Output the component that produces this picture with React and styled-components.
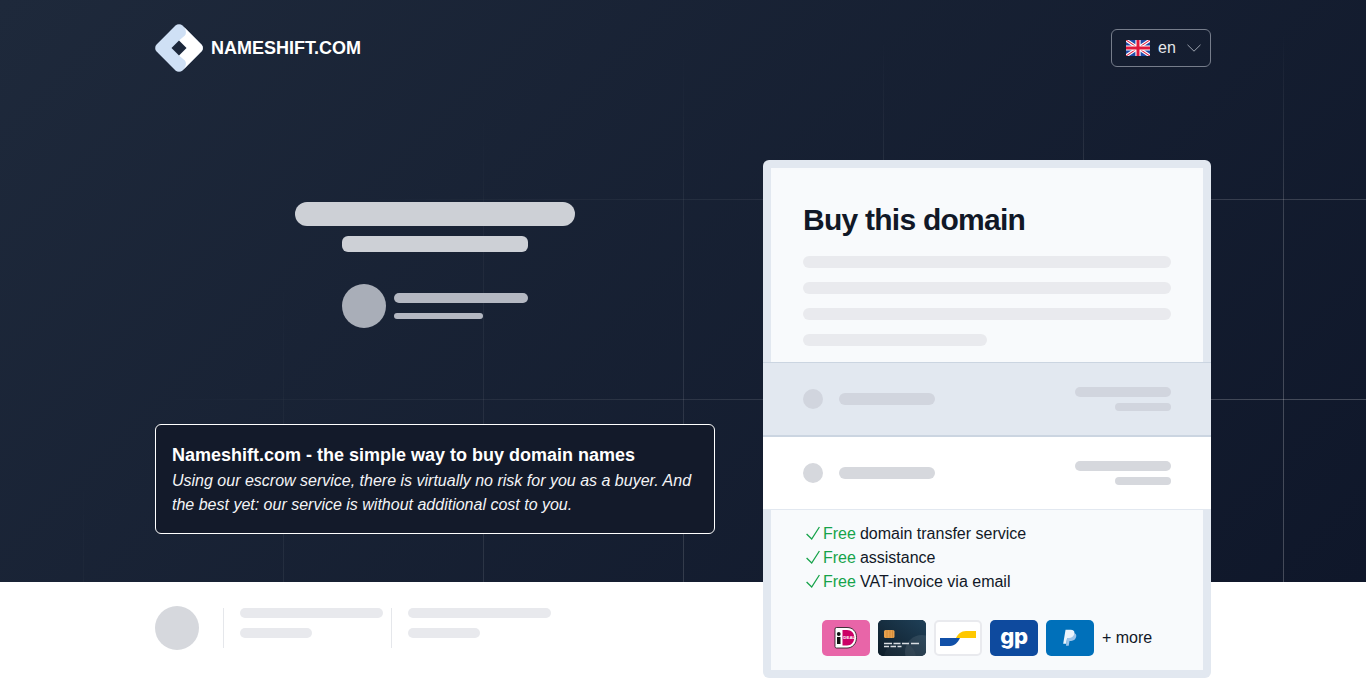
import React from "react";
import styled, { createGlobalStyle } from "styled-components";

const Global = createGlobalStyle`
  html, body { margin: 0; padding: 0; background: #fff; }
  body { font-family: "Liberation Sans", Arial, sans-serif; color: #111827; overflow: hidden; }
  * { box-sizing: border-box; }
`;

const Hero = styled.section`
  position: relative;
  height: 582px;
  background: linear-gradient(135deg, #1e293b 0%, #0f172a 100%);
`;
const GridLines = styled.div`
  position: absolute;
  inset: 0;
  background-image:
    linear-gradient(to right, rgba(255, 255, 255, 0.22) 1px, transparent 1px),
    linear-gradient(to bottom, rgba(255, 255, 255, 0.22) 1px, transparent 1px);
  background-size: 200px 200px;
  background-position: 83px 199px;
  mask-image:
    linear-gradient(135deg, transparent 28%, #000 88%),
    linear-gradient(to bottom, transparent 30px, #000 220px);
  mask-composite: intersect;
`;
const Wrap = styled.div`
  position: relative;
  width: 1056px;
  margin: 0 auto;
`;
const TopBar = styled.header`
  display: flex;
  align-items: center;
  justify-content: space-between;
  padding-top: 24px;
`;
const Brand = styled.div`
  display: flex;
  align-items: center;
  gap: 8px;
  font-size: 18px;
  font-weight: 700;
  color: #fff;
`;
const LangButton = styled.div`
  display: flex;
  align-items: center;
  width: 100px;
  height: 38px;
  padding: 0 9px 0 14px;
  border: 1px solid #767d8b;
  border-radius: 6px;
  color: #e5e7eb;
  font-size: 16px;
`;
const LangLabel = styled.span`
  margin: 0 auto 0 8px;
`;
const Columns = styled.div`
  display: grid;
  grid-template-columns: 560px 448px;
  gap: 48px;
  padding-top: 88px;
`;
const Left = styled.div`
  display: flex;
  flex-direction: column;
  align-items: center;
  padding-top: 42px;
`;
const Bar = styled.div`
  width: ${(p) => p.$w};
  height: ${(p) => p.$h}px;
  border-radius: ${(p) => Math.min(p.$h / 2, 6) * (p.$h > 16 ? 2 : 1)}px;
  background: ${(p) => p.$c};
  flex: none;
`;
const SubtitleBar = styled(Bar)`
  margin-top: 10px;
`;
const Dot = styled.div`
  width: ${(p) => p.$s}px;
  height: ${(p) => p.$s}px;
  border-radius: 50%;
  background: ${(p) => p.$c};
  flex: none;
`;
const Author = styled.div`
  display: flex;
  align-items: center;
  gap: 8px;
  width: 186px;
  margin: 32px 0 96px;
`;
const AuthorLines = styled.div`
  display: flex;
  flex-direction: column;
  gap: 10px;
  flex: 1;
`;
const InfoBox = styled.div`
  width: 100%;
  height: 110px;
  padding: 16px;
  border: 1px solid #fff;
  border-radius: 6px;
  background: #131a2a;
  color: #fff;
`;
const InfoTitle = styled.h2`
  margin: 0;
  font-size: 18px;
  line-height: 28px;
  font-weight: 700;
`;
const InfoText = styled.p`
  margin: 0;
  font-size: 16px;
  line-height: 24px;
  font-style: italic;
  color: #f3f4f6;
`;
const Card = styled.aside`
  position: relative;
  z-index: 2;
  height: 518px;
  padding: 8px 0;
  display: flex;
  flex-direction: column;
  background: #e2e8f0;
  border-radius: 6px;
`;
const CardTop = styled.div`
  height: 194px;
  margin: 0 8px;
  padding: 34px 32px 0;
  background: #f8fafc;
`;
const CardTitle = styled.h1`
  margin: 0 0 18px;
  font-size: 30px;
  line-height: 36px;
  font-weight: 700;
  letter-spacing: -0.75px;
  color: #111827;
`;
const TextBars = styled.div`
  display: flex;
  flex-direction: column;
  gap: 14px;
`;
const PlanRow = styled.div`
  display: flex;
  align-items: center;
  height: 74px;
  padding: 0 40px;
  gap: 16px;
  background: ${(p) => (p.$active ? "#e2e8f0" : "#fff")};
  border-top: 1px solid #cbd5e1;
  border-bottom: 1px solid ${(p) => (p.$active ? "#cbd5e1" : "#e2e8f0")};
`;
const PriceBars = styled.div`
  display: flex;
  flex-direction: column;
  align-items: flex-end;
  gap: 6px;
  margin-left: auto;
`;
const CardBottom = styled.div`
  flex: 1;
  margin: 0 8px;
  padding: 12px 32px 0;
  background: #f8fafc;
`;
const Feature = styled.div`
  display: flex;
  align-items: center;
  height: 24px;
  font-size: 16px;
  color: #111827;
`;
const Free = styled.span`
  color: #16a34a;
  margin-right: 4px;
`;
const Payments = styled.div`
  display: flex;
  align-items: center;
  justify-content: center;
  gap: 8px;
  margin-top: 26px;
  font-size: 16px;
  color: #111827;
`;
const PayIcon = styled.div`
  width: 48px;
  height: 36px;
  border-radius: 5px;
  overflow: hidden;
  background: ${(p) => p.$bg};
  display: flex;
  align-items: center;
  justify-content: center;
  flex: none;
  border: ${(p) => (p.$outlined ? "2px solid #e9eaee" : "none")};
`;
const GpLabel = styled.span`
  font-family: "Inter", sans-serif;
  font-weight: 800;
  font-size: 22px;
  line-height: 28px;
  margin-top: -5px;
  letter-spacing: -0.5px;
  color: #fff;
`;
const Footer = styled.footer`
  height: 99px;
  background: #fff;
`;
const FooterRow = styled.div`
  display: flex;
  align-items: center;
  width: 1056px;
  margin: 0 auto;
  padding-top: 24px;
`;
const FooterGroup = styled.div`
  display: flex;
  flex-direction: column;
  gap: 10px;
  height: 40px;
  margin-left: ${(p) => p.$ml}px;
  padding-left: 16px;
  border-left: 1px solid #e5e7eb;
`;

const Logo = () => (
  <svg width="48" height="48" viewBox="0 0 48 48" aria-hidden="true">
    <path d="M20.5 1.6a5 5 0 0 1 7 0L46.4 20.500a5 5 0 0 1 0 7L27.500 46.400a5 5 0 0 1-7 0L1.600 27.500a5 5 0 0 1 0-7Z" fill="#cfe0f5" />
    <path d="M27.500 1.600 46.400 20.500a5 5 0 0 1 0 7L27.500 46.400c3.400-3 4.400-7.400 2.400-10L24 31.500 31.500 24 24 16.500l5.900-4.900c2-2.600 1-7-2.400-10Z" fill="#fff" />
    <path d="M24 16.500 31.500 24 24 31.500 16.500 24Z" fill="#1c273a" />
  </svg>
);

const Flag = () => (
  <svg width="24" height="16" viewBox="0 0 60 40" aria-hidden="true">
    <rect width="60" height="40" fill="#1f48a8" />
    <path d="M0 0 60 40M60 0 0 40" stroke="#fff" strokeWidth="8" />
    <path d="M0 0 60 40M60 0 0 40" stroke="#e0173c" strokeWidth="2.600" />
    <path d="M30 0V40M0 20H60" stroke="#fff" strokeWidth="13" />
    <path d="M30 0V40M0 20H60" stroke="#e0173c" strokeWidth="7.500" />
  </svg>
);

const Chevron = () => (
  <svg width="14" height="8" viewBox="0 0 14 8" fill="none" aria-hidden="true">
    <path d="M.5 .8 7 7.200 13.500 .8" stroke="#9ca3af" strokeWidth="1" />
  </svg>
);

const Check = () => (
  <svg width="20" height="20" viewBox="0 0 20 20" fill="none" aria-hidden="true">
    <path d="M3.600 10 8.700 15 16.400 3" stroke="#16a34a" strokeWidth="1.300" />
  </svg>
);

const Ideal = () => (
  <svg width="24" height="22" viewBox="0 0 24 22" aria-hidden="true">
    <path d="M1 2a1.500 1.500 0 0 1 1.500-1.500H13c5.500 0 9.500 3.800 9.500 10S18.500 21 13 21H2.500A1.500 1.500 0 0 1 1 19.500Z" fill="#fff" stroke="#111" strokeWidth=".8" />
    <path d="M8.500 3H13c4.300 0 7.300 3 7.300 7.500S17.300 18.500 13 18.500H8.500Z" fill="#cc0066" />
    <rect x="3" y="10" width="3.500" height="7" fill="#111" />
    <circle cx="4.750" cy="7" r="1.900" fill="#111" />
    <text x="9.300" y="12" fontFamily="Liberation Sans, sans-serif" fontWeight="700" fontSize="4.400" fill="#fff">DEAL</text>
  </svg>
);

const CreditCard = () => (
  <svg width="48" height="36" viewBox="0 0 48 36" aria-hidden="true">
    <defs>
      <linearGradient id="cc" x1="0" y1="1" x2="1" y2="0">
        <stop offset="0" stopColor="#0e1c28" />
        <stop offset="1" stopColor="#1f4058" />
      </linearGradient>
    </defs>
    <rect width="48" height="36" fill="url(#cc)" />
    <circle cx="44" cy="32" r="17" fill="#fff" opacity=".09" />
    <circle cx="22" cy="38" r="16" fill="#fff" opacity=".04" />
    <rect x="6" y="10" width="10.500" height="8" rx="1.500" fill="#e8a04c" />
    <path d="M9 10v8M12 10v8M14.500 10v8" stroke="#c77f2e" strokeWidth=".6" />
    <path d="M6 23.500h8M15.500 23.500h7M24 23.500h7M33 23.500h8M6 26.500h5M12.500 26.500h5.500M19.500 26.500h4" stroke="#d9dde2" strokeWidth="1.300" />
  </svg>
);

const Bancontact = () => (
  <svg width="44" height="32" viewBox="0 0 44 32" aria-hidden="true">
    <path d="M4 16H24C22 20 19 24 14 24H4Z" fill="#1150a8" />
    <path d="M20 16C22 12 25 9 30 9H40V16Z" fill="#ffc800" />
  </svg>
);

const PayPal = () => (
  <svg width="17" height="19" viewBox="0 0 20 24" aria-hidden="true">
    <path d="M8 5h6.500c3 0 4.500 1.700 4 4.500-.6 3.500-3 5.500-6.500 5.500h-2l-1 6H5.500Z" fill="#9cc4ea" />
    <path d="M5 1h6.500c3.300 0 5.200 1.600 4.700 4.500-.6 3.800-3.300 6-7 6H7l-1.200 7H2Z" fill="#eaf3fc" />
  </svg>
);

const skeletonHero = "#cdd0d6";
const skeletonAuthor = "#b4b8c2";

function Plan({ active }) {
  const c = active ? "#d1d5de" : "#d6d8dd";
  return (
    <PlanRow $active={active}>
      <Dot $s={20} $c={c} />
      <Bar $w="96px" $h={12} $c={c} />
      <PriceBars>
        <Bar $w="96px" $h={10} $c={c} />
        <Bar $w="56px" $h={8} $c={c} />
      </PriceBars>
    </PlanRow>
  );
}

export default function App() {
  return (
    <>
      <Global />
      <Hero>
        <GridLines />
        <Wrap>
          <TopBar>
            <Brand>
              <Logo />
              NAMESHIFT.COM
            </Brand>
            <LangButton>
              <Flag />
              <LangLabel>en</LangLabel>
              <Chevron />
            </LangButton>
          </TopBar>
          <Columns>
            <Left>
              <Bar $w="280px" $h={24} $c={skeletonHero} />
              <SubtitleBar $w="186px" $h={16} $c={skeletonHero} />
              <Author>
                <Dot $s={44} $c="#a9aeb8" />
                <AuthorLines>
                  <Bar $w="100%" $h={10} $c={skeletonAuthor} />
                  <Bar $w="89px" $h={6} $c={skeletonAuthor} />
                </AuthorLines>
              </Author>
              <InfoBox>
                <InfoTitle>Nameshift.com - the simple way to buy domain names</InfoTitle>
                <InfoText>
                  Using our escrow service, there is virtually no risk for you as a buyer. And the best yet: our
                  service is without additional cost to you.
                </InfoText>
              </InfoBox>
            </Left>
            <Card>
              <CardTop>
                <CardTitle>Buy this domain</CardTitle>
                <TextBars>
                  <Bar $w="100%" $h={12} $c="#e9eaee" />
                  <Bar $w="100%" $h={12} $c="#e9eaee" />
                  <Bar $w="100%" $h={12} $c="#e9eaee" />
                  <Bar $w="50%" $h={12} $c="#e9eaee" />
                </TextBars>
              </CardTop>
              <Plan active />
              <Plan />
              <CardBottom>
                <Feature><Check /><Free>Free</Free>domain transfer service</Feature>
                <Feature><Check /><Free>Free</Free>assistance</Feature>
                <Feature><Check /><Free>Free</Free>VAT-invoice via email</Feature>
                <Payments>
                  <PayIcon $bg="#e865a8"><Ideal /></PayIcon>
                  <PayIcon $bg="#12283a"><CreditCard /></PayIcon>
                  <PayIcon $bg="#fff" $outlined><Bancontact /></PayIcon>
                  <PayIcon $bg="#0e4a9e"><GpLabel>gp</GpLabel></PayIcon>
                  <PayIcon $bg="#0070ba"><PayPal /></PayIcon>
                  + more
                </Payments>
              </CardBottom>
            </Card>
          </Columns>
        </Wrap>
      </Hero>
      <Footer>
        <FooterRow>
          <Dot $s={44} $c="#d6d8dd" />
          <FooterGroup $ml={24}>
            <Bar $w="143px" $h={10} $c="#e8e9ed" />
            <Bar $w="72px" $h={10} $c="#e8e9ed" />
          </FooterGroup>
          <FooterGroup $ml={8}>
            <Bar $w="143px" $h={10} $c="#e8e9ed" />
            <Bar $w="72px" $h={10} $c="#e8e9ed" />
          </FooterGroup>
        </FooterRow>
      </Footer>
    </>
  );
}
